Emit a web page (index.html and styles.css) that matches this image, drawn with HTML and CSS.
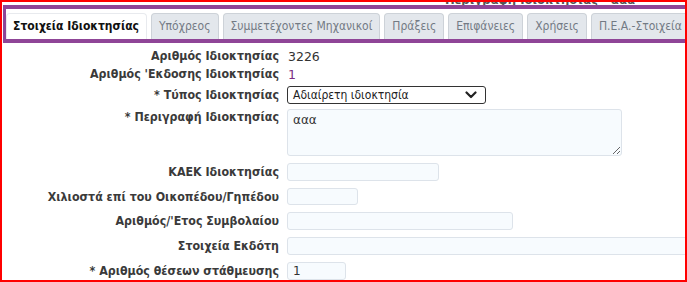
FILE: index.html
```html
<!DOCTYPE html>
<html lang="el">
<head>
    <meta charset="UTF-8">
    <meta name="viewport" content="width=device-width, initial-scale=1.0">
    <title>Στοιχεία Ιδιοκτησίας</title>
    <link rel="stylesheet" href="styles.css">
</head>
<body>
    <div class="frame">
        <div class="caption"><span>Περιγραφή Ιδιοκτησίας - ααα</span></div>
        <div class="tabbar">
            <div class="tab active">Στοιχεία Ιδιοκτησίας</div>
            <div class="tab">Υπόχρεος</div>
            <div class="tab">Συμμετέχοντες Μηχανικοί</div>
            <div class="tab">Πράξεις</div>
            <div class="tab">Επιφάνειες</div>
            <div class="tab">Χρήσεις</div>
            <div class="tab">Π.Ε.Α.-Στοιχεία Διαχείρισης</div>
        </div>
        <div class="form">
            <div class="row info">
                <label>Αριθμός Ιδιοκτησίας</label>
                <span class="value">3226</span>
            </div>
            <div class="row info">
                <label>Αριθμός 'Εκδοσης Ιδιοκτησίας</label>
                <span class="value link">1</span>
            </div>
            <div class="row select-row">
                <label>* Τύπος Ιδιοκτησίας</label>
                <div class="select">
                    <span>Αδιαίρετη ιδιοκτησία</span>
                    <svg width="12" height="8" viewBox="0 0 12 8"><path d="M1.5 1.5 L6 6 L10.5 1.5" fill="none" stroke="#222" stroke-width="2.2" stroke-linecap="round" stroke-linejoin="round"/></svg>
                </div>
            </div>
            <div class="row text-row">
                <label>* Περιγραφή Ιδιοκτησίας</label>
                <textarea class="area">ααα</textarea>
            </div>
            <div class="row">
                <label>ΚΑΕΚ Ιδιοκτησίας</label>
                <input class="field w152" type="text">
            </div>
            <div class="row">
                <label>Χιλιοστά επί του Οικοπέδου/Γηπέδου</label>
                <input class="field w71 short" type="text">
            </div>
            <div class="row">
                <label>Αριθμός/'Ετος Συμβολαίου</label>
                <input class="field w226" type="text">
            </div>
            <div class="row">
                <label>Στοιχεία Εκδότη</label>
                <input class="field w420" type="text">
            </div>
            <div class="row">
                <label>* Αριθμός θέσεων στάθμευσης</label>
                <input class="field w59" type="text" value="1">
            </div>
        </div>
    </div>
</body>
</html>
```

FILE: styles.css
```css
body {
    margin: 0;
    padding: 0;
    background: #fff;
    font-family: "DejaVu Sans Condensed", "DejaVu Sans", Verdana, sans-serif;
    color: #333;
}
.frame {
    width: 687px;
    height: 282px;
    box-sizing: border-box;
    border: 2px solid #f00;
    overflow: hidden;
    position: relative;
}
.caption {
    height: 3px;
    overflow: hidden;
    padding-left: 443px;
    white-space: nowrap;
}
.caption span {
    display: block;
    margin-top: -9px;
    font-size: 13px;
    line-height: 13px;
    font-weight: bold;
    color: #555;
}
.tabbar {
    display: flex;
    gap: 4px;
    margin-left: 1px;
    height: 26px;
    padding-top: 4px;
    border-style: solid;
    border-color: #8f4597;
    border-width: 4px 0 4px 3px;
    white-space: nowrap;
    overflow: hidden;
}
.tab {
    flex: none;
    height: 26px;
    box-sizing: border-box;
    padding: 0 7px;
    line-height: 25px;
    font-size: 12px;
    color: #737a84;
    background: #e3e7ec;
    border: 1px solid #cdd2d8;
    border-bottom: none;
    border-radius: 4px 4px 0 0;
}
.tab.active {
    background: #fff;
    color: #111;
    font-weight: bold;
    font-size: 12px;
    border-color: #e8eaee;
    padding: 0 7px 0 6px;
}
.form {
    padding-top: 4px;
}
.row {
    display: flex;
    align-items: center;
    margin-top: 7px;
}
.row label {
    flex: none;
    width: 281px;
    padding-right: 4px;
    box-sizing: border-box;
    margin-right: 4px;
    text-align: right;
    font-size: 12.3px;
    font-weight: bold;
    color: #3a3a3a;
    white-space: nowrap;
}
.row.info {
    margin-top: 0;
    height: 18px;
}
.row.select-row {
    margin-top: 3px;
}
.row.text-row {
    margin-top: 5px;
    align-items: flex-start;
}
.row.text-row label {
    padding-top: 1px;
}
.value {
    font-family: "DejaVu Sans", sans-serif;
    font-size: 12.5px;
    color: #333;
    margin-left: 1px;
}
.value.link {
    color: #7b2c83;
}
.select {
    width: 199px;
    height: 18px;
    box-sizing: border-box;
    border: 1px solid #333;
    border-radius: 3px;
    display: flex;
    align-items: center;
    justify-content: space-between;
    padding: 0 8px 0 5px;
    font-size: 12px;
    color: #222;
}
.area {
    width: 335px;
    height: 47px;
    box-sizing: border-box;
    background: #f7fbfe;
    border: 1px solid #dde3ea;
    border-radius: 3px;
    padding: 3px 5px;
    font-family: "DejaVu Sans", sans-serif;
    font-size: 12px;
    color: #333;
    margin: 0;
}
.field {
    height: 18px;
    box-sizing: border-box;
    background: #f7fbfe;
    border: 1px solid #dde3ea;
    border-radius: 3px;
    padding: 0 5px;
    margin: 0;
    font-family: "DejaVu Sans", sans-serif;
    font-size: 12px;
    color: #333;
}
.field.short {
    height: 17px;
}
.w152 { width: 152px; }
.w71 { width: 71px; }
.w226 { width: 226px; }
.w420 { width: 420px; flex: none; }
.w59 { width: 59px; }
```
